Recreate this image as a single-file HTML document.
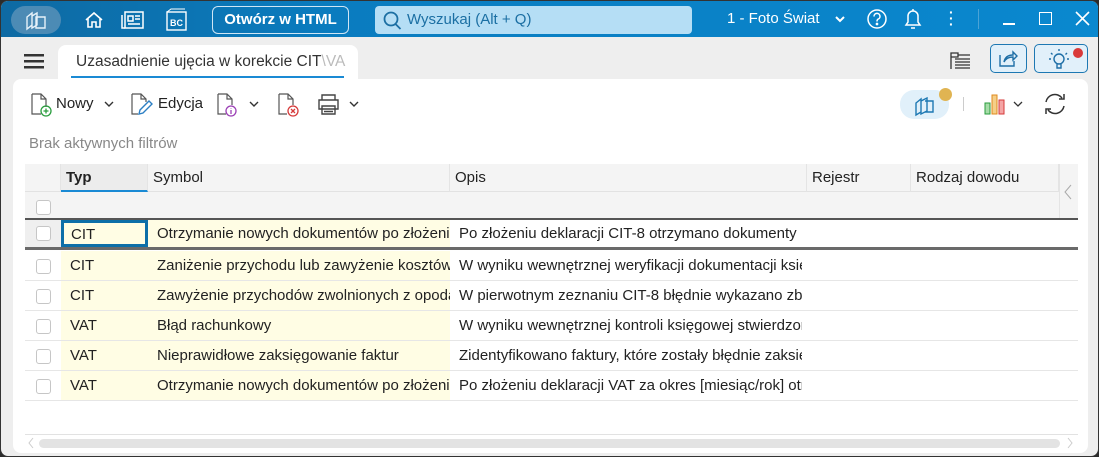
<!DOCTYPE html>
<html><head><meta charset="utf-8"><style>
*{box-sizing:border-box;margin:0;padding:0}
body{width:1099px;height:457px;overflow:hidden;background:#2b2b2b;font-family:"Liberation Sans",sans-serif;position:relative}
.win{position:absolute;left:0;top:0;width:1099px;height:457px;border-radius:8px;overflow:hidden;background:#eeeeee;border:1px solid #333}
.top{position:absolute;left:0;top:0;width:1099px;height:36px;background:linear-gradient(90deg,#0e6aa3 0%,#0a7cbf 30%,#0a88cf 100%)}
.t{position:absolute;color:#fff;font-size:15px}
.btn{position:absolute;left:211px;top:5px;width:137px;height:28px;border:1px solid #cfe6f5;border-radius:6px;color:#fff;font-weight:bold;font-size:15px;text-align:center;line-height:26px}
.search{position:absolute;left:374px;top:5px;width:317px;height:28px;background:#b5def5;border-radius:4px;color:#1b6fa3;font-size:15px;line-height:28px;padding-left:32px}
.tab{position:absolute;left:57px;top:44px;width:300px;height:36px;background:#fff;border-radius:8px 8px 0 0;font-size:15.5px;color:#333;padding:8px 0 0 18px;white-space:nowrap;overflow:hidden}
.tab .u{position:absolute;left:13px;right:14px;top:31px;height:2px;background:#1a8ad4}
.panel{position:absolute;left:12px;top:78px;width:1075px;height:374px;background:#fff;border-radius:8px}
.tb{position:absolute;font-size:15px;color:#222}
.grid{position:absolute;left:24px;top:163px;width:1053px}
.hdr{position:absolute;top:0;height:28px;background:#f4f4f4;border-bottom:1px solid #e2e2e2;font-size:15px;color:#222;line-height:28px;padding-left:5px;border-right:1px solid #e4e4e4}
.row{position:absolute;left:0;width:1053px;height:30px;border-bottom:1px solid #e6e6e6;font-size:15px;color:#222;line-height:30px}
.c{position:absolute;top:0;height:100%;white-space:nowrap;overflow:hidden;padding-left:9px}
.cb{position:absolute;left:11px;top:8px;width:15px;height:15px;border:1px solid #c6c6c6;border-radius:3px;background:#fff}
.y{background:#fffde4}
</style></head><body><div class="win">
<div class="top">
 <div style="position:absolute;left:10px;top:5px;width:50px;height:28px;border-radius:14px;background:#4c8bb5"></div>
 <svg style="position:absolute;left:24px;top:10px" width="22" height="20" fill="none" stroke="#e6f2fa" stroke-width="1.4"><path d="M2 6l5-4v12l-5 4z M7 5l5-3v12l-5 3z M11 6h9v11h-9z"/></svg>
 <svg style="position:absolute;left:83px;top:9px" width="20" height="20" fill="none" stroke="#fff" stroke-width="1.6"><path d="M2 10l8-7 8 7M4 8v9h4v-5h4v5h4V8"/></svg>
 <svg style="position:absolute;left:120px;top:9px" width="24" height="20" fill="none" stroke="#fff" stroke-width="1.5"><rect x="4" y="2" width="18" height="16"/><path d="M1 5v13h3M7 6h5v5H7zM14 6h5M14 9h5M7 14h12"/></svg>
 <svg style="position:absolute;left:165px;top:7px" width="22" height="24"><rect x="1" y="4" width="19" height="18" fill="none" stroke="#fff" stroke-width="1.4"/><path d="M1 4l4-3h14" stroke="#fff" fill="none"/><text x="4" y="18" font-size="9" font-weight="bold" fill="#fff" font-family="Liberation Sans">BC</text></svg>
 <div class="btn">Otwórz w HTML</div>
 <div class="search"><svg style="position:absolute;left:7px;top:5px" width="20" height="20" fill="none" stroke="#1b6fa3" stroke-width="1.8"><circle cx="9" cy="8" r="6.5"/><path d="M13.5 13l5 5"/></svg>Wyszukaj (Alt + Q)</div>
 <div class="t" style="left:726px;top:9px">1 - Foto Świat</div>
 <svg style="position:absolute;left:833px;top:13px" width="12" height="10" fill="none" stroke="#fff" stroke-width="2"><path d="M2 3l4 4 4-4"/></svg>
 <svg style="position:absolute;left:865px;top:7px" width="22" height="22" fill="none" stroke="#fff" stroke-width="1.5"><circle cx="11" cy="11" r="9"/><path d="M8 8.5a3 3 0 1 1 4 2.7c-1 .5-1 1-1 2.3"/><circle cx="11" cy="16" r=".6" fill="#fff"/></svg>
 <svg style="position:absolute;left:902px;top:6px" width="20" height="24" fill="none" stroke="#fff" stroke-width="1.5"><path d="M3 18h14l-2-3V9a5 5 0 0 0-10 0v6zM8 21h4M10 2v2"/></svg>
 <div class="t" style="left:948px;top:8px;font-weight:bold;line-height:6px;font-size:14px">·<br>·<br>·</div>
 <div style="position:absolute;left:977px;top:8px;width:1px;height:20px;background:#4ba3d6"></div>
 <div style="position:absolute;left:1002px;top:22px;width:12px;height:1.5px;background:#fff"></div>
 <div style="position:absolute;left:1038px;top:11px;width:13px;height:13px;border:1.5px solid #fff"></div>
 <svg style="position:absolute;left:1074px;top:10px" width="15" height="15" stroke="#fff" stroke-width="1.6"><path d="M1 1l13 13M14 1L1 14"/></svg>
</div>
<svg style="position:absolute;left:23px;top:53px" width="20" height="15" fill="#333"><rect y="0" width="20" height="2.5"/><rect y="6" width="20" height="2.5"/><rect y="12" width="20" height="2.5"/></svg>
<div class="tab">Uzasadnienie ujęcia w korekcie CIT<span style="color:#bbb">\VA</span><div class="u"></div></div>
<svg style="position:absolute;left:948px;top:50px" width="24" height="20" fill="none" stroke="#333" stroke-width="1.3"><path d="M2 2h7v4H2zM2 2v16M9 4h12M6 8h15M6 11h15M6 14h15M6 17h15"/></svg>
<div style="position:absolute;left:989px;top:43px;width:37px;height:29px;border:1px solid #1d78b3;border-radius:5px;background:#e1f0fa"></div>
<svg style="position:absolute;left:996px;top:48px" width="22" height="20" fill="none" stroke="#1d6ea6" stroke-width="1.4"><path d="M3 6v11h14v-5M7 13c1-5 4-7 9-7V3l4 4-4 4V8c-4 0-7 1-9 5z"/></svg>
<div style="position:absolute;left:1033px;top:43px;width:54px;height:29px;border:1px solid #1d78b3;border-radius:5px;background:#e1f0fa"></div>
<svg style="position:absolute;left:1046px;top:46px" width="26" height="24" fill="none" stroke="#1d6ea6" stroke-width="1.4"><circle cx="12" cy="12" r="5"/><path d="M10 17v4h4v-4M12 2v2M4 6l1.5 1.5M20 6l-1.5 1.5M2 12h2M20 12h2"/></svg>
<div style="position:absolute;left:1072px;top:47px;width:10px;height:10px;border-radius:5px;background:#d93a3a"></div>
<div class="panel"></div>
<svg style="position:absolute;left:28px;top:91px" width="26" height="26" fill="none"><path d="M3 2h9l5 5v8M3 2v20h9M12 2v5h5" stroke="#555" stroke-width="1.2"/><circle cx="17" cy="19" r="5" stroke="#2a9d3e" stroke-width="1.3"/><path d="M17 16.5v5M14.5 19h5" stroke="#2a9d3e" stroke-width="1.3"/></svg>
<div class="tb" style="left:55px;top:94px">Nowy</div>
<svg style="position:absolute;left:103px;top:99px" width="10" height="8" fill="none" stroke="#333" stroke-width="1.4"><path d="M1 2l4 4 4-4"/></svg>
<svg style="position:absolute;left:128px;top:91px" width="26" height="26" fill="none"><path d="M3 2h9l5 5v3M3 2v20h6M12 2v5h5" stroke="#555" stroke-width="1.2"/><path d="M10 22l1-4 9-9 3 3-9 9z" stroke="#2c7fc4" stroke-width="1.4"/></svg>
<div class="tb" style="left:157px;top:94px">Edycja</div>
<svg style="position:absolute;left:214px;top:91px" width="26" height="26" fill="none"><path d="M3 2h9l5 5v6M3 2v20h8M12 2v5h5" stroke="#555" stroke-width="1.2"/><circle cx="16" cy="19" r="5" stroke="#9b3fb5" stroke-width="1.3"/><path d="M16 18v4M16 16v.5" stroke="#9b3fb5" stroke-width="1.3"/></svg>
<svg style="position:absolute;left:248px;top:99px" width="10" height="8" fill="none" stroke="#333" stroke-width="1.4"><path d="M1 2l4 4 4-4"/></svg>
<svg style="position:absolute;left:275px;top:91px" width="26" height="26" fill="none"><path d="M3 2h9l5 5v6M3 2v20h8M12 2v5h5" stroke="#555" stroke-width="1.2"/><circle cx="17" cy="19" r="5" stroke="#d63a3a" stroke-width="1.3"/><path d="M15 17l4 4M19 17l-4 4" stroke="#d63a3a" stroke-width="1.3"/></svg>
<svg style="position:absolute;left:315px;top:91px" width="26" height="26" fill="none" stroke="#444" stroke-width="1.4"><path d="M6 8V3h13v5M3 8h19v9H3zM6 14h13v8H6zM8 17h9M8 19.5h9"/></svg>
<svg style="position:absolute;left:348px;top:99px" width="10" height="8" fill="none" stroke="#333" stroke-width="1.4"><path d="M1 2l4 4 4-4"/></svg>
<div style="position:absolute;left:899px;top:89px;width:49px;height:29px;border-radius:14px;background:#e1f0fa"></div>
<svg style="position:absolute;left:912px;top:92px" width="24" height="24" fill="none" stroke="#1d78b3" stroke-width="1.4"><path d="M3 10l5-4v13l-5 3z M8 8l6-3v13l-6 3z M12 8h8v11h-8"/></svg>
<div style="position:absolute;left:938px;top:87px;width:13px;height:13px;border-radius:7px;background:#e0b452"></div>
<div style="position:absolute;left:962px;top:96px;width:1px;height:14px;background:#ccc"></div>
<svg style="position:absolute;left:982px;top:91px" width="26" height="24"><rect x="2" y="11" width="5" height="11" fill="#a6dca8" stroke="#2a9d3e"/><rect x="9" y="3" width="5" height="19" fill="#f5cf88" stroke="#e08a1e"/><rect x="16" y="8" width="5" height="14" fill="#f4a5a5" stroke="#d63a3a"/></svg>
<svg style="position:absolute;left:1012px;top:99px" width="10" height="8" fill="none" stroke="#333" stroke-width="1.3"><path d="M1 2l4 4 4-4"/></svg>
<svg style="position:absolute;left:1041px;top:90px" width="26" height="26" fill="none" stroke="#333" stroke-width="1.5"><path d="M4 11a9 9 0 0 1 16-4M22 3v5h-5M22 15a9 9 0 0 1-16 4M4 23v-5h5"/></svg>
<div style="position:absolute;left:28px;top:134px;font-size:15px;color:#888">Brak aktywnych filtrów</div>
<div class="grid">
 <div style="position:absolute;left:0;top:0;width:1053px;height:54px;background:#f4f4f4"></div>
 <div class="hdr" style="left:0;width:36px"></div>
 <div class="hdr" style="left:36px;width:87px;font-weight:bold;background:#ececec;border-bottom:2px solid #1a8ad4">Typ</div>
 <div class="hdr" style="left:123px;width:302px">Symbol</div>
 <div class="hdr" style="left:425px;width:357px">Opis</div>
 <div class="hdr" style="left:782px;width:104px">Rejestr</div>
 <div class="hdr" style="left:886px;width:148px">Rodzaj dowodu</div>
 <div style="position:absolute;left:1034px;top:0;width:1px;height:54px;background:#e4e4e4"></div>
 <svg style="position:absolute;left:1038px;top:20px" width="10" height="16" fill="none" stroke="#aaa"><path d="M8 1L2 8l6 7"/></svg>
 <div class="cb" style="top:36px"></div>
 <div style="position:absolute;left:0;top:54px;width:1053px;height:2px;background:#555"></div>
</div>
<div style="position:absolute;left:24px;top:219px">
 <div class="row" style="top:0;height:30px;border-bottom:3px solid #6a6a6a"><div style="position:absolute;left:0;top:0;width:36px;height:27px;background:#efefef"></div><div class="cb" style="top:6px"></div><div class="c y" style="left:36px;width:87px;border:3px solid #0d6fa8;line-height:24px;padding-left:7px">CIT</div><div class="c y" style="left:123px;width:302px;line-height:28px">Otrzymanie nowych dokumentów po złożeniu</div><div class="c" style="left:425px;width:357px;line-height:28px">Po złożeniu deklaracji CIT-8 otrzymano dokumenty</div></div>
 <div class="row" style="top:31px"><div class="cb"></div><div class="c y" style="left:36px;width:87px">CIT</div><div class="c y" style="left:123px;width:302px">Zaniżenie przychodu lub zawyżenie kosztów</div><div class="c" style="left:425px;width:352px">W wyniku wewnętrznej weryfikacji dokumentacji księgowej</div></div>
 <div class="row" style="top:61px"><div class="cb"></div><div class="c y" style="left:36px;width:87px">CIT</div><div class="c y" style="left:123px;width:302px">Zawyżenie przychodów zwolnionych z opodatkowania</div><div class="c" style="left:425px;width:352px">W pierwotnym zeznaniu CIT-8 błędnie wykazano zbyt</div></div>
 <div class="row" style="top:91px"><div class="cb"></div><div class="c y" style="left:36px;width:87px">VAT</div><div class="c y" style="left:123px;width:302px">Błąd rachunkowy</div><div class="c" style="left:425px;width:352px">W wyniku wewnętrznej kontroli księgowej stwierdzono</div></div>
 <div class="row" style="top:121px"><div class="cb"></div><div class="c y" style="left:36px;width:87px">VAT</div><div class="c y" style="left:123px;width:302px">Nieprawidłowe zaksięgowanie faktur</div><div class="c" style="left:425px;width:352px">Zidentyfikowano faktury, które zostały błędnie zaksięgowane</div></div>
 <div class="row" style="top:151px"><div class="cb"></div><div class="c y" style="left:36px;width:87px">VAT</div><div class="c y" style="left:123px;width:302px">Otrzymanie nowych dokumentów po złożeniu</div><div class="c" style="left:425px;width:352px">Po złożeniu deklaracji VAT za okres [miesiąc/rok] otrzymano</div></div>
</div>
<div style="position:absolute;left:24px;top:433px;width:1053px;height:1px;background:#e2e2e2"></div>
<div style="position:absolute;left:38px;top:438px;width:1021px;height:9px;border-radius:5px;background:#e3e3e3"></div>
<svg style="position:absolute;left:27px;top:436px" width="6" height="12" fill="none" stroke="#ccc"><path d="M5 1L1 6l4 5"/></svg>
<svg style="position:absolute;left:1066px;top:436px" width="6" height="12" fill="none" stroke="#ccc"><path d="M1 1l4 5-4 5"/></svg>
</div></body></html>
